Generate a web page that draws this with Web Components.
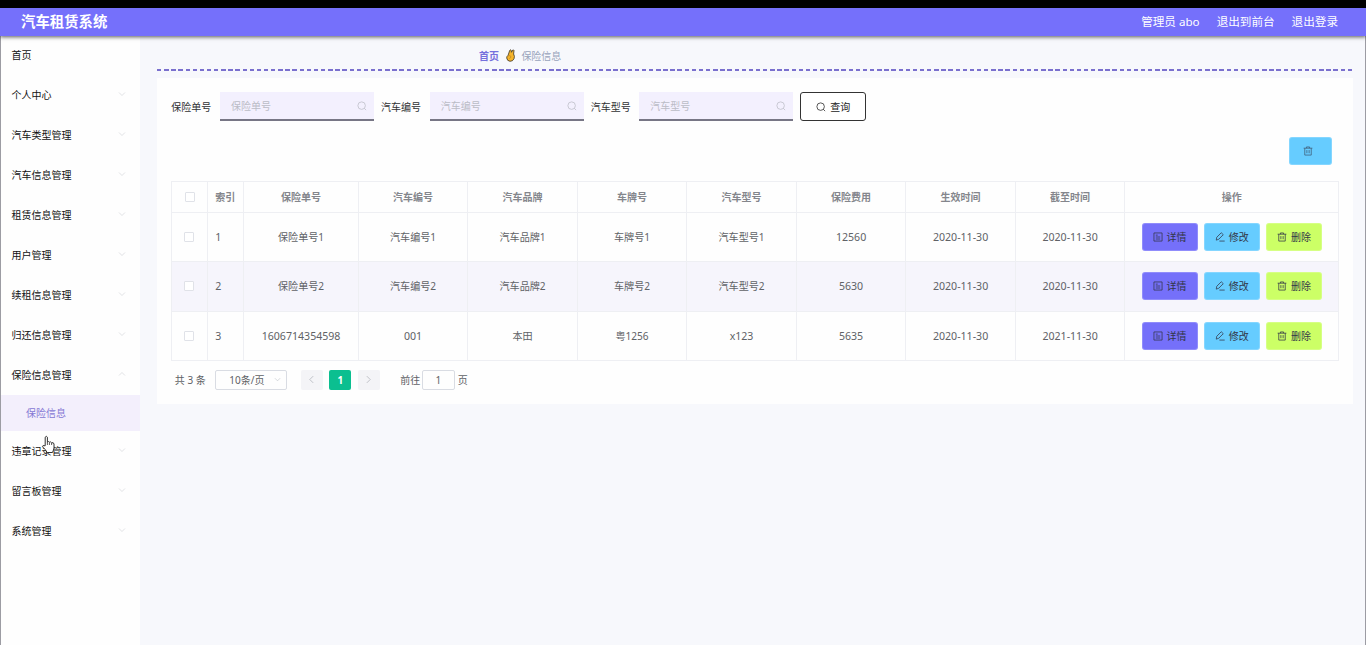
<!DOCTYPE html>
<html lang="zh-CN">
<head>
<meta charset="UTF-8">
<title>汽车租赁系统</title>
<style>
  * { box-sizing: border-box; }
  body {
    margin: 0;
    height: 645px;
    overflow: hidden;
    background: #f7f8fc;
    color: #303133;
    font: 10px/14px "Noto Sans", "Noto Sans CJK SC", sans-serif;
  }
</style>
</head>
<body>
<rental-app></rental-app>

<script>
// icon shapes on a 16x16 grid
const icons = {
  search: '<circle cx="7.4" cy="7.4" r="6"/><path d="M11.7 11.7L14.6 14.6"/>',
  down: '<path d="M2 5l6 6 6-6"/>',
  up: '<path d="M2 11l6-6 6 6"/>',
  left: '<path d="M11 2L5 8l6 6"/>',
  right: '<path d="M5 2l6 6-6 6"/>',
  detail: '<path d="M1.5 1.5h13v13h-13zM4.5 5h3M4.5 8h7M4.5 11.2h7"/>',
  edit: '<path d="M2 13l.8-4.6L10 1.2l3.2 3.1L6 11.6zM7 14.5h8.5"/>',
  trash: '<path d="M1 3.5h14M5.5 3.5v-2h5v2M2.8 3.5v11h10.4v-11M6.2 6.5v5M9.8 6.5v5"/>',
}

const base = '*{box-sizing:border-box}:host{display:block}'

class UiIcon extends HTMLElement {
  constructor() {
    super();
    this.attachShadow({ mode: "open" });
  }
  connectedCallback() {
    const size = this.getAttribute("size") || 10;
    this.shadowRoot.innerHTML = `<style>
      :host { display: inline-flex; flex: none; }
      svg { display: block; fill: none; stroke: currentColor; stroke-width: 1.2; }
    </style>
    <svg width="${size}" height="${size}" viewBox="0 0 16 16">${icons[this.getAttribute("name")]}</svg>`;
  }
}
customElements.define("ui-icon", UiIcon);

class AppHeader extends HTMLElement {
  constructor() {
    super();
    this.attachShadow({ mode: "open" }).innerHTML = `<style>${base}
      :host {
        display: flex; align-items: center; height: 28px; padding: 0 28px 0 21px;
        background: #7570fb; color: #fff; font-size: 11.6px; line-height: 20px;
        box-shadow: 0 1px 4px rgba(0,0,0,.65); position: relative; z-index: 2;
      }
      h1 { margin: 0; font-size: 14.4px; line-height: 20px; }
      nav { display: flex; gap: 17px; margin-left: auto; margin-top: -1px; }
    </style>
    <h1><slot name="title"></slot></h1>
    <nav><slot></slot></nav>`;
  }
}
customElements.define("app-header", AppHeader);

class MenuItem extends HTMLElement {
  constructor() {
    super();
    this.attachShadow({ mode: "open" });
  }
  connectedCallback() {
    const arrow = this.getAttribute("arrow");
    this.shadowRoot.innerHTML = `<style>${base}
      :host {
        display: flex; align-items: center; justify-content: space-between;
        height: 40px; padding: 0 14px 0 11.5px; color: #111;
      }
      :host([first]) { height: 39px; padding-bottom: 1px; }
      :host([sub]) { height: 36px; padding: 0 0 0 26px; background: #f3effc; color: #8578d4; }
      ui-icon { color: #ccced4; margin-top: -2px; }
    </style>
    <span><slot></slot></span>${arrow ? `<ui-icon name="${arrow}" size="8"></ui-icon>` : ""}`;
  }
}
customElements.define("menu-item", MenuItem);

class SearchField extends HTMLElement {
  constructor() {
    super();
    this.attachShadow({ mode: "open" });
  }
  connectedCallback() {
    const label = this.getAttribute("label");
    this.shadowRoot.innerHTML = `<style>${base}
      :host { display: flex; align-items: center; gap: 8px; }
      label { width: 40.7px; white-space: nowrap; }
      .box {
        display: flex; align-items: center; justify-content: space-between;
        width: 154px; height: 29px; padding: 1px 7px 0 11px;
        background: #f3f0fe; border-bottom: 2px solid #777685; color: #bbbcc6;
      }
    </style>
    <label>${label}</label>
    <div class="box"><span>${label}</span><ui-icon name="search"></ui-icon></div>`;
  }
}
customElements.define("search-field", SearchField);

class UiButton extends HTMLElement {
  constructor() {
    super();
    this.attachShadow({ mode: "open" });
  }
  connectedCallback() {
    this.shadowRoot.innerHTML = `<style>${base}
      :host { display: block; flex: none; width: 56px; height: 28px; color: #333648; }
      button {
        display: flex; align-items: center; justify-content: center; gap: 4px;
        width: 100%; height: 100%; padding: 0; font: inherit; color: inherit;
        border: 1px solid rgba(255,255,255,.2); border-radius: 3px; background: #66ccff;
      }
      :host([kind="detail"]) button { background: #7570fa; }
      :host([kind="trash"]) button { background: #ccff66; }
      :host([kind="search"]) { width: 66px; height: 29px; color: #222; }
      :host([kind="search"]) button { background: #fff; border-color: #333; }
      :host([kind="batch"]) { width: 43px; }
      :host([kind="batch"]) button { padding-right: 4px; }
      :host([kind="batch"]) ui-icon { opacity: .75; }
    </style>
    <button><ui-icon name="${this.getAttribute("icon")}"></ui-icon><slot></slot></button>`;
  }
}
customElements.define("ui-button", UiButton);

class InsuranceTable extends HTMLElement {
  constructor() {
    super();
    this.attachShadow({ mode: "open" });
  }
  connectedCallback() {
    const heads = ["保险单号", "汽车编号", "汽车品牌", "车牌号", "汽车型号", "保险费用", "生效时间", "截至时间", "操作"];
    const rows = [
      ["保险单号1", "汽车编号1", "汽车品牌1", "车牌号1", "汽车型号1", "12560", "2020-11-30", "2020-11-30"],
      ["保险单号2", "汽车编号2", "汽车品牌2", "车牌号2", "汽车型号2", "5630", "2020-11-30", "2020-11-30"],
      ["1606714354598", "001", "本田", "粤1256", "x123", "5635", "2020-11-30", "2021-11-30"],
    ];
    const widths = [36, 36, 114.5, 109.5, 109.5, 109.5, 109.5, 109.5, 109.5, 109.5, 214];
    this.shadowRoot.innerHTML = `<style>${base}
      table {
        width: 1167px; table-layout: fixed; border-collapse: separate; border-spacing: 0;
        border: solid #eeeff3; border-width: 1px 0 0 1px; color: #606266; text-align: center;
      }
      th, td { padding: 0; border: solid #eeeff3; border-width: 0 1px 1px 0; }
      th { height: 31px; color: #84868c; font-weight: 600; }
      td { height: 49.3px; font-size: 10.6px; }
      td.cjk { font-size: 10.1px; }
      th:nth-child(2), td:nth-child(2) { text-align: left; padding-left: 7px; }
      tr:nth-child(even) td { background: #f6f5fc; }
      .check {
        display: block; width: 10px; height: 10px; margin: 0 auto 0 12px;
        border: 1px solid #e0e2e8; border-radius: 1px; background: #fff;
      }
      th .check { margin-left: 13px; }
      .ops { display: flex; justify-content: center; gap: 6.3px; font-size: 10px; }
    </style>
    <table>
      <colgroup>${widths.map(w => `<col style="width:${w}px">`).join("")}</colgroup>
      <thead><tr><th><i class="check"></i></th><th>索引</th>${heads.map(h => `<th>${h}</th>`).join("")}</tr></thead>
      <tbody>${rows.map((row, i) => `<tr>
        <td><i class="check"></i></td><td>${i + 1}</td>
        ${row.map(c => `<td class="${/[\u4e00-\u9fff]/.test(c) ? "cjk" : ""}">${c}</td>`).join("")}
        <td><div class="ops">
          <ui-button kind="detail" icon="detail">详情</ui-button>
          <ui-button kind="edit" icon="edit">修改</ui-button>
          <ui-button kind="trash" icon="trash">删除</ui-button>
        </div></td>
      </tr>`).join("")}</tbody>
    </table>`;
  }
}
customElements.define("insurance-table", InsuranceTable);

class PageNav extends HTMLElement {
  constructor() {
    super();
    this.attachShadow({ mode: "open" }).innerHTML = `<style>${base}
      :host { display: flex; align-items: center; color: #606266; white-space: nowrap; }
      .total { width: 40px; }
      .size {
        display: flex; align-items: center; justify-content: space-between;
        width: 72px; height: 20px; padding: 0 5px 0 13.5px; margin-right: 14px;
        border: 1px solid #d9dce3; border-radius: 2px;
      }
      .size ui-icon { color: #b4b8c0; }
      .page {
        display: flex; align-items: center; justify-content: center;
        width: 22px; height: 20px; margin-right: 6.5px; border-radius: 2px;
        background: #f4f4f7; color: #a5a8b0;
      }
      .active { background: #0bbf90; color: #fff; font-weight: 700; }
      .go { margin-left: 14px; width: 21.5px; }
      .num { width: 33px; height: 20px; border: 1px solid #d9dce3; border-radius: 2px; text-align: center; line-height: 18px; margin-right: 3px; }
    </style>
    <span class="total">共 3 条</span>
    <div class="size"><span>10条/页</span><ui-icon name="down" size="7"></ui-icon></div>
    <div class="page"><ui-icon name="left" size="9"></ui-icon></div>
    <div class="page active">1</div>
    <div class="page"><ui-icon name="right" size="9"></ui-icon></div>
    <span class="go">前往</span><div class="num">1</div><span>页</span>`;
  }
}
customElements.define("page-nav", PageNav);

class BreadCrumb extends HTMLElement {
  constructor() {
    super();
    this.attachShadow({ mode: "open" }).innerHTML = `<style>${base}
      :host {
        display: flex; align-items: center; gap: 5.7px; height: 35px; padding: 4px 0 0 322px;
        /* dashed rule under the path */
        background: repeating-linear-gradient(90deg, #7a70ce 0 4.4px, transparent 4.4px 7.13px) bottom / 100% 2px no-repeat;
      }
      b { color: #7670dc; }
      span { color: #98a3bb; }
    </style>
    <b>首页</b>
    <svg width="11" height="13" viewBox="0 0 11 13">
      <path d="M3.1 6.3L4.7 1.4Q5.4.3 6.2 1.3L6.4 3.3 7.7 1.1Q8.7.5 9 1.6L8.6 5Q10 7.3 9 9.8 7.8 12.4 5 12.3 2.1 12 1.7 9 1.6 7.3 3.1 6.3z" fill="#f6b52c" stroke="#3b3526" stroke-width=".8"/>
      <path d="M3.3 7.2Q5.3 5.8 5.8 7.3T4.2 9.5" fill="none" stroke="#b07a1c" stroke-width=".6"/>
    </svg>
    <span>保险信息</span>`;
  }
}
customElements.define("bread-crumb", BreadCrumb);

class RentalApp extends HTMLElement {
  constructor() {
    super();
    this.attachShadow({ mode: "open" });
  }
  connectedCallback() {
    const before = ["个人中心", "汽车类型管理", "汽车信息管理", "租赁信息管理", "用户管理", "续租信息管理", "归还信息管理"];
    const after = ["违章记录管理", "留言板管理", "系统管理"];
    const item = t => `<menu-item arrow="down">${t}</menu-item>`;
    this.shadowRoot.innerHTML = `<style>${base}
      :host { display: flex; flex-direction: column; height: 645px; position: relative; border-top: 8px solid #000; }
      .body { display: flex; flex: 1; border: solid #9c9ca3; border-width: 0 1px; }
      aside { width: 139px; background: #fefefe; margin-right: 17px; }
      aside menu-item { margin-left: -1px; }
      aside menu-item[sub] { margin-left: 0; padding-left: 25px; }
      main { width: 1196px; }
      .card { margin-top: 7px; height: 326px; padding: 14px 15px 0 14.3px; background: #fefefe; }
      .filters { display: flex; gap: 7px; }
      .tools { display: flex; justify-content: flex-end; padding: 16px 6.5px 16px 0; }
      page-nav { margin: 9px 0 0 3.5px; }
      .pointer { position: absolute; left: 41px; top: 427px; z-index: 3; }
    </style>
    <app-header>
      <span slot="title">汽车租赁系统</span>
      <span>管理员 abo</span><span>退出到前台</span><span>退出登录</span>
    </app-header>
    <div class="body">
      <aside>
        <menu-item first>首页</menu-item>
        ${before.map(item).join("")}
        <menu-item arrow="up">保险信息管理</menu-item>
        <menu-item sub>保险信息</menu-item>
        ${after.map(item).join("")}
      </aside>
      <main>
        <bread-crumb></bread-crumb>
        <section class="card">
          <div class="filters">
            <search-field label="保险单号"></search-field>
            <search-field label="汽车编号"></search-field>
            <search-field label="汽车型号"></search-field>
            <ui-button kind="search" icon="search">查询</ui-button>
          </div>
          <div class="tools"><ui-button kind="batch" icon="trash"></ui-button></div>
          <insurance-table></insurance-table>
          <page-nav></page-nav>
        </section>
      </main>
    </div>
    <svg class="pointer" width="15" height="19" viewBox="0 0 15 19">
      <path d="M4.2 10.8V2.2Q5.3.4 6.4 2.2V7Q7.6 5.9 8.4 7.2 9.8 6.3 10.6 7.8 12.6 7 13 9V13Q12.6 15 11.5 17.5H6.2Q4.6 14.5 1.5 11.8 1.3 9.8 4.2 10.8z" fill="#fff" stroke="#333" stroke-width="1"/>
      <path d="M6.4 7v3M8.4 7.4V10M10.6 8v2" fill="none" stroke="#333" stroke-width=".8"/>
    </svg>`;
  }
}
customElements.define("rental-app", RentalApp);
</script>
</body>
</html>
